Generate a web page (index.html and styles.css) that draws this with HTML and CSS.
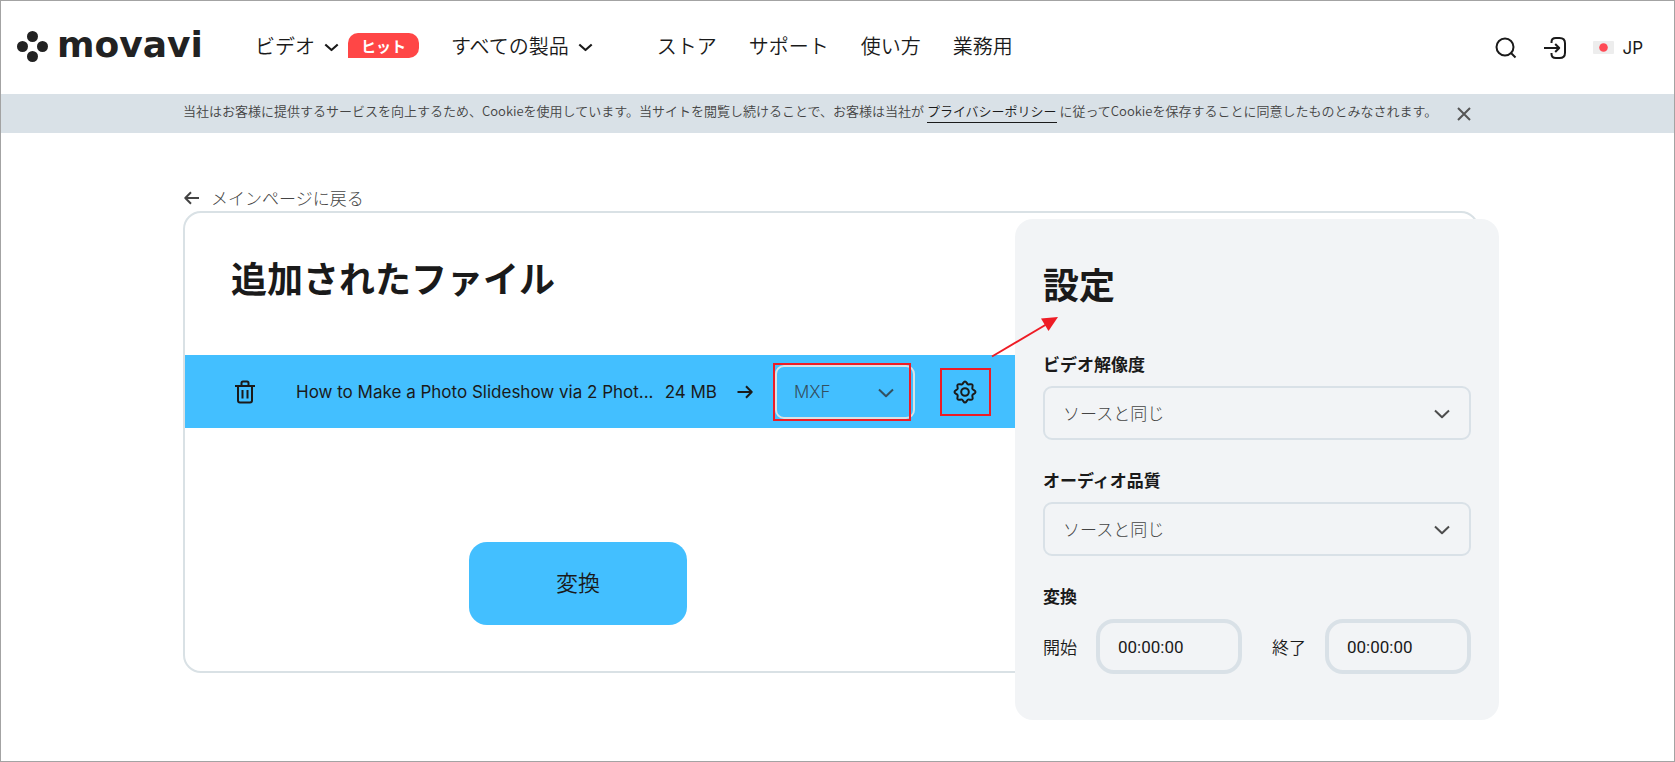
FILE: index.html
```html
<!DOCTYPE html>
<html lang="ja">
<head>
<meta charset="utf-8">
<meta name="viewport" content="width=device-width, initial-scale=1">
<title>Movavi</title>
<link rel="stylesheet" href="styles.css">
</head>
<body>
<div class="page">
  <header class="header">
    <a class="logo" href="#">
      <svg class="logo-mark" viewBox="0 0 31 31" aria-hidden="true"><circle cx="15.5" cy="5.5" r="5.5"/><circle cx="5.5" cy="15.5" r="5.5"/><circle cx="25.5" cy="15.5" r="5.5"/><circle cx="15.5" cy="25.5" r="5.5"/></svg>
      <span class="logo-name">movavi</span>
    </a>
    <nav class="nav">
      <a class="nav-link nav-video" href="#">ビデオ
        <svg class="chevron-small" viewBox="0 0 14 8" aria-hidden="true"><path d="M1.200 1.200 7 6.400l5.800-5.200"/></svg>
        <span class="badge">ヒット</span>
      </a>
      <a class="nav-link nav-products" href="#">すべての製品
        <svg class="chevron-small" viewBox="0 0 14 8" aria-hidden="true"><path d="M1.200 1.200 7 6.400l5.800-5.200"/></svg>
      </a>
      <a class="nav-link" href="#">ストア</a>
      <a class="nav-link" href="#">サポート</a>
      <a class="nav-link" href="#">使い方</a>
      <a class="nav-link" href="#">業務用</a>
    </nav>
    <div class="tools">
      <button class="icon-button" type="button" aria-label="検索">
        <svg width="22" height="22" viewBox="0 0 22 22"><circle cx="10" cy="10" r="8.500"/><path d="m16 16 4.500 4.500"/></svg>
      </button>
      <button class="icon-button" type="button" aria-label="ログイン">
        <svg width="22" height="22" viewBox="0 0 22 22"><path d="M7.500 6V5c0-2.700 1.500-4 4.300-4h3.700C19 1 21 2.800 21 6.300v9.400c0 3.500-2 5.300-5.500 5.300h-3.700c-2.800 0-4.300-1.300-4.300-4v-1M0 11h15M11.200 7l4 4-4 4"/></svg>
      </button>
      <button class="language" type="button">
        <svg width="21" height="13" viewBox="0 0 21 13" aria-hidden="true"><rect class="flag-field" width="21" height="13" rx="1"/><circle class="flag-sun" cx="10.500" cy="6.500" r="4.300"/></svg>
        JP
      </button>
    </div>
  </header>

  <div class="cookie">
    <div class="cookie-inner">
      <p class="cookie-text">当社はお客様に提供するサービスを向上するため、Cookieを使用しています。当サイトを閲覧し続けることで、お客様は当社が <a class="policy" href="#">プライバシーポリシー</a> に従ってCookieを保存することに同意したものとみなされます。</p>
      <button class="close" type="button" aria-label="閉じる">
        <svg width="14" height="14" viewBox="0 0 14 14"><path d="m1 1 12 12M13 1 1 13"/></svg>
      </button>
    </div>
  </div>

  <main class="main">
    <a class="back" href="#">
      <svg width="16" height="14" viewBox="0 0 16 14" aria-hidden="true"><path d="M15 7H1.500M7 1.300 1.300 7 7 12.700"/></svg>
      メインページに戻る
    </a>
    <section class="card">
      <div class="files">
        <h1 class="title">追加されたファイル</h1>
        <div class="file">
          <button class="icon-button" type="button" aria-label="削除">
            <svg class="trash" width="20" height="24" viewBox="0 0 20 24"><path d="M3 6v14.500C3 21.600 3.700 22.500 5 22.500h10c1.300 0 2-.9 2-2V6M0 6h20M6.500 5.500V3c0-1 .5-1.500 1.500-1.500h4c1 0 1.500.5 1.500 1.500v2.500M7.500 10v8.500M12.500 10v8.500"/></svg>
          </button>
          <span class="file-name">How to Make a Photo Slideshow via 2 Phot...</span>
          <span class="file-size">24 MB</span>
          <svg class="to-arrow" width="16" height="14" viewBox="0 0 16 14" aria-hidden="true"><path d="M.5 7h14M9 1.300 14.700 7 9 12.700"/></svg>
          <div class="select format">
            <select aria-label="形式"><option>MXF</option></select>
            <svg class="chevron" viewBox="0 0 16 10" aria-hidden="true"><path d="m1 1.500 7 6.800 7-6.800"/></svg>
            <i class="mark format-mark"></i>
          </div>
          <button class="icon-button gear" type="button" aria-label="設定">
            <svg width="24" height="24" viewBox="0 0 24 24"><path d="M12 1.500c1.500 0 1.700 2.200 3 2.800 1.400.6 3.200-.9 4.300.3s-.5 2.900.1 4.300c.6 1.300 3.100 1.500 3.100 3.100s-2.500 1.800-3.100 3.100c-.6 1.400 1.100 3.100-.1 4.300s-2.900-.3-4.300.3c-1.300.6-1.500 2.800-3 2.800s-1.700-2.200-3-2.800c-1.400-.6-3.200.9-4.300-.3s.5-2.900-.1-4.300C4 13.800 1.500 13.600 1.500 12S4 10.200 4.600 8.900C5.200 7.500 3.500 5.800 4.700 4.600S7.600 4.900 9 4.300c1.300-.6 1.500-2.800 3-2.800z"/><circle cx="12" cy="12" r="3.800"/></svg>
            <i class="mark gear-mark"></i>
          </button>
        </div>
        <div class="actions"><button class="convert" type="button">変換</button></div>
      </div>

      <aside class="settings">
        <h2 class="title">設定</h2>
        <div class="field">
          <label for="resolution">ビデオ解像度</label>
          <div class="select">
            <select id="resolution"><option>ソースと同じ</option></select>
            <svg class="chevron" viewBox="0 0 16 10" aria-hidden="true"><path d="m1 1.500 7 6.800 7-6.800"/></svg>
          </div>
        </div>
        <div class="field">
          <label for="audio">オーディオ品質</label>
          <div class="select">
            <select id="audio"><option>ソースと同じ</option></select>
            <svg class="chevron" viewBox="0 0 16 10" aria-hidden="true"><path d="m1 1.500 7 6.800 7-6.800"/></svg>
          </div>
        </div>
        <fieldset class="range">
          <legend>変換</legend>
          <div class="times">
            <div class="time"><label for="start">開始</label><input id="start" type="text" value="00:00:00"></div>
            <div class="time"><label for="end">終了</label><input id="end" type="text" value="00:00:00"></div>
          </div>
        </fieldset>
        <svg class="pointer" width="68" height="42" viewBox="0 0 68 42" aria-hidden="true"><path class="pointer-line" d="M1 40.500 56 8"/><path class="pointer-head" d="M67 1 50 2.500 57.500 15z"/></svg>
      </aside>
    </section>
  </main>
</div>
</body>
</html>
```

FILE: styles.css
```css
* { box-sizing: border-box; }

body {
  margin: 0;
  color: #1a1a1a;
  background: #fff;
  font-family: "Noto Sans CJK JP", sans-serif;
  font-size: 17px;
  font-weight: 350;
  line-height: 24px;
}

h1, h2, p, fieldset, legend { margin: 0; padding: 0; }
fieldset { border: 0; min-width: 0; }
a { color: inherit; text-decoration: none; }
button, select, input { font: inherit; color: inherit; background: none; }
button { border: 0; padding: 0; cursor: pointer; }
svg { display: block; flex: none; fill: none; stroke: currentColor; stroke-width: 2; stroke-linejoin: round; }

.page { min-height: 100vh; border: 1px solid #a3a3a3; }

.header { display: flex; align-items: center; height: 93px; padding: 0 31px 2px 16px; }
.logo { display: flex; align-items: center; gap: 9px; width: 238px; color: #222; }
.logo-mark { width: 31px; height: 31px; fill: currentColor; stroke: none; }
.logo-name { font: bold 36px/40px "DejaVu Sans", sans-serif; padding-bottom: 4px; }

.nav { display: flex; gap: 32px; font-size: 20px; line-height: 30px; padding-bottom: 2px; }
.nav-link { display: flex; align-items: center; gap: 9px; white-space: nowrap; }
.nav-products { margin-right: 32px; }
.chevron-small { width: 15px; height: 9px; margin-top: 4px; }
.badge {
  padding: 0 13px;
  border-radius: 10px 10px 10px 0;
  background: #ff4646;
  color: #fff;
  font-size: 15px;
  font-weight: 700;
  line-height: 25px;
}

.tools { display: flex; align-items: center; gap: 27px; margin-left: auto; padding-top: 2px; }
.icon-button { position: relative; display: flex; flex: none; }
.language { display: flex; align-items: center; gap: 8px; font: 400 17px/24px Inter, sans-serif; }
.flag-field { fill: #ededed; stroke: none; }
.flag-sun { fill: #ff4a55; stroke: none; }

.cookie { background: #d9e1e7; color: #444; }
.cookie-inner {
  display: flex;
  align-items: center;
  justify-content: space-between;
  max-width: 1309px;
  height: 39px;
  margin: 0 auto;
  padding-right: 21px;
}
.cookie-text { font-size: 13px; line-height: 20px; white-space: nowrap; padding-bottom: 5px; }
.policy { color: #1a1a1a; padding-bottom: 2px; border-bottom: 1px solid #1a1a1a; }
.close { color: #555; }

.main { max-width: 1309px; margin: 0 auto; padding: 53px 13px 36px 0; }
.back {
  display: flex;
  align-items: center;
  gap: 11px;
  width: max-content;
  margin-bottom: 1px;
  padding-left: 1px;
  color: #444;
  font-weight: 300;
}

.card {
  display: flex;
  align-items: flex-start;
  height: 462px;
  padding-top: 6px;
  border: 2px solid #d9e1e5;
  border-radius: 18px;
}
.files { flex: 1; min-width: 0; padding-top: 31px; }
.title { font-size: 36px; line-height: 54px; font-weight: 700; }
.files .title { padding-left: 46px; }
.file {
  display: flex;
  align-items: center;
  height: 73px;
  margin-top: 51px;
  padding: 0 38px 0 50px;
  background: #43bfff;
  font-family: Inter, sans-serif;
  font-weight: 400;
}
.file-name { flex: 1; min-width: 0; margin-left: 41px; overflow: hidden; white-space: nowrap; text-overflow: ellipsis; }
.file-size { margin: 0 20px 0 8px; white-space: nowrap; }
.file .select { width: 140px; margin-left: 22px; }
.file select { border-color: #d9e1e5; color: #33505f; padding-left: 17px; }
.file .chevron { color: #33505f; right: 21px; }
.gear { margin-left: 38px; }
.actions { display: flex; justify-content: center; padding: 114px 44px 0 0; }
.convert { width: 218px; height: 83px; padding-bottom: 5px; border-radius: 18px; background: #43bfff; font-size: 22px; }

.settings {
  position: relative;
  flex: none;
  width: 484px;
  margin-right: -22px;
  padding: 37px 28px 46px;
  border-radius: 18px;
  background: #f2f4f6;
}
.settings .title { margin-bottom: 42px; }
.field { display: grid; gap: 10px; margin-bottom: 28px; }
.field label, legend { font-weight: 700; }
.select { position: relative; }
select {
  display: block;
  width: 100%;
  height: 54px;
  padding: 0 44px 0 18px;
  border: 2px solid #d9e1e7;
  border-radius: 9px;
  color: #444;
  font-weight: 300;
  appearance: none;
}
.chevron { position: absolute; right: 21px; top: 23px; width: 16px; height: 10px; color: #4d4d4d; pointer-events: none; }
.times { display: flex; justify-content: space-between; margin-top: 11px; }
.time { display: flex; align-items: center; gap: 19px; }
.time input {
  width: 146px;
  height: 55px;
  padding: 0 18px;
  border: 4px solid #d9e1e7;
  border-radius: 18px;
  font: 400 17px/24px Roboto, sans-serif;
}

.mark { position: absolute; border: 2px solid #ee1c25; pointer-events: none; }
.format-mark { inset: -2px 4px -2px -2px; }
.gear-mark { inset: -12px -14px -12px -13px; }
.pointer { position: absolute; left: -24px; top: 97px; }
.pointer-line { stroke: #ee1c25; }
.pointer-head { fill: #ee1c25; stroke: none; }
```
